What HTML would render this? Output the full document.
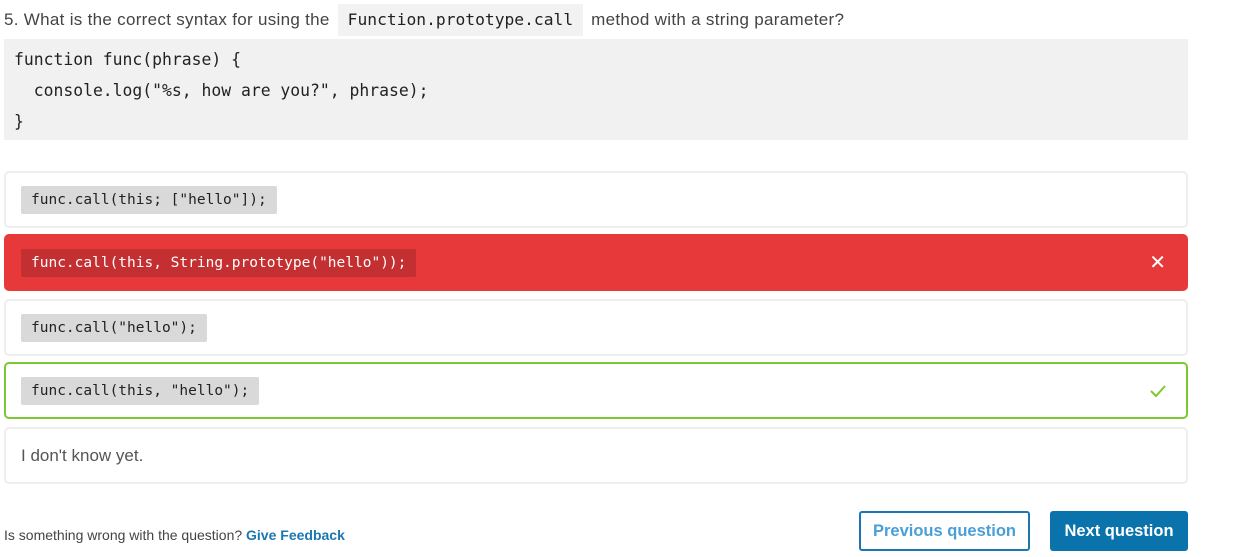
<!DOCTYPE html>
<html><head><style>
*{box-sizing:border-box;margin:0;padding:0}
body{width:1235px;height:557px;background:#fff;font-family:"Liberation Sans",sans-serif;position:relative;overflow:hidden;color:#333}
.q{position:absolute;left:4px;top:4px;height:32px;line-height:32px;font-size:17px;letter-spacing:0.3px;color:#444;white-space:nowrap}
.q code{display:inline-block;background:#f2f2f2;font-family:"DejaVu Sans Mono","Liberation Mono",monospace;font-size:16.3px;letter-spacing:0;padding:0 10px;margin:0 3px;height:32px;line-height:32px;color:#222}
.pre{position:absolute;left:4px;top:39px;width:1184px;height:101px;background:#f1f1f1;font-family:"DejaVu Sans Mono","Liberation Mono",monospace;font-size:16.4px;line-height:31px;padding:5px 10px;color:#222;white-space:pre}
.opt{position:absolute;left:4px;width:1184px;height:57px;border:2px solid #eee;border-radius:5px;background:#fff}
.chip{position:absolute;left:15px;top:13px;height:28px;line-height:28px;padding:0 10px;background:#d9d9d9;border-radius:2px;font-family:"DejaVu Sans Mono","Liberation Mono",monospace;font-size:14.5px;color:#222}
.red{background:#e8393a;border-color:#e8393a}
.red .chip{background:#c42f31;color:#fff}
.green{border-color:#7dc92d}
.foot{position:absolute;left:4px;top:527px;font-size:14px;color:#444}
.foot b{color:#1b77b2}
.btn{position:absolute;top:511px;height:40px;border-radius:3px;font-weight:bold;font-size:16.5px;line-height:36px;text-align:center}
</style></head><body>
<div class="q">5. What is the correct syntax for using the <code>Function.prototype.call</code> method with a string parameter?</div>
<div class="pre">function func(phrase) {
  console.log("%s, how are you?", phrase);
}</div>
<div class="opt" style="top:171px"><span class="chip">func.call(this; ["hello"]);</span></div>
<div class="opt red" style="top:234px"><span class="chip">func.call(this, String.prototype("hello"));</span><span style="position:absolute;right:20px;top:13px;color:#fff;font-size:20px;line-height:28px">✕</span></div>
<div class="opt" style="top:299px"><span class="chip">func.call("hello");</span></div>
<div class="opt green" style="top:362px"><span class="chip">func.call(this, "hello");</span><svg style="position:absolute;right:20px;top:20px" width="16" height="14" viewBox="0 0 16 14"><path d="M1 7l5 5L15 2" fill="none" stroke="#7dc92d" stroke-width="2"/></svg></div>
<div class="opt" style="top:427px"><span style="position:absolute;left:15px;top:17px;font-size:17px;color:#555">I don't know yet.</span></div>
<div class="foot">Is something wrong with the question? <b>Give Feedback</b></div>
<div class="btn" style="left:859px;width:171px;border:2px solid #1b77b2;color:#4a9fd8;background:#fff">Previous question</div>
<div class="btn" style="left:1050px;width:138px;background:#0a73ac;color:#fff;line-height:40px">Next question</div>
</body></html>
